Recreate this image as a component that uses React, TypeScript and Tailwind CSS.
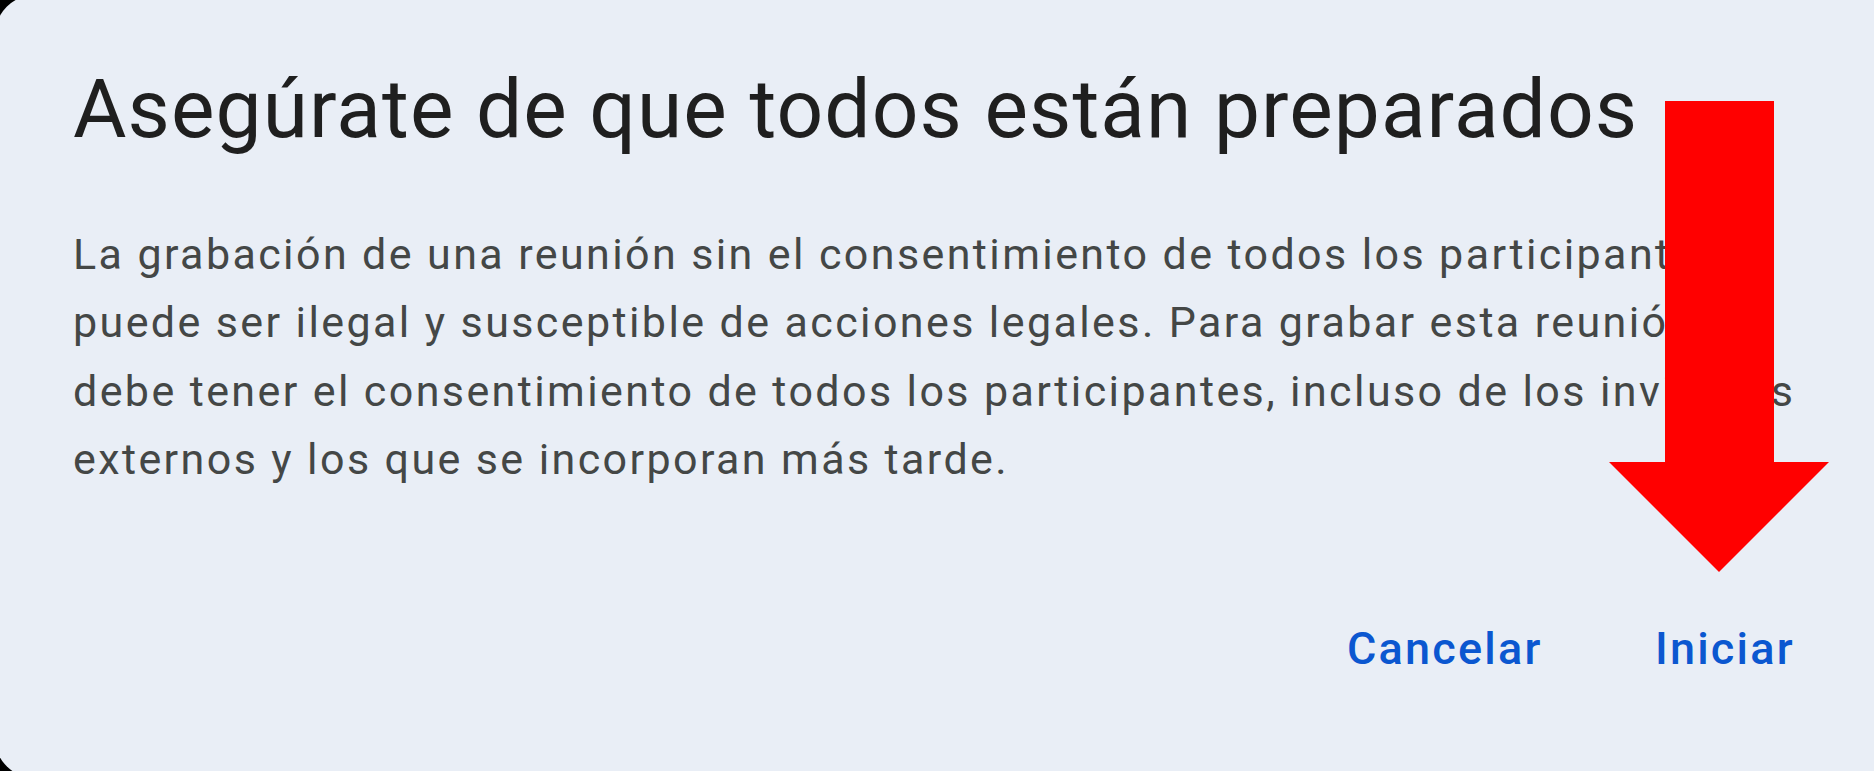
import React from "react";

export default function App() {
  return (
    <div className="relative w-[1874px] h-[771px] overflow-hidden bg-black" style={{ fontFamily: "Roboto, 'Noto Sans', sans-serif" }}>
      <div className="-mt-[5px] -ml-[5px] w-[1900px] h-[783px] rounded-[40px] bg-[#e9eef6] flex flex-col pl-[78px]">
        <h1 className="mt-[66px] text-[82px] leading-[96px] tracking-[1.1px] text-[#1f1f1f] font-normal whitespace-nowrap">
          Asegúrate de que todos están preparados
        </h1>
        <p className="mt-[63px] text-[43px] leading-[68.3px] tracking-[2.4px] text-[#444746] whitespace-nowrap">
          La grabación de una reunión sin el consentimiento de todos los participantes
          <br />
          puede ser ilegal y susceptible de acciones legales. Para grabar esta reunión,
          <br />
          debe tener el consentimiento de todos los participantes, incluso de los invitados
          <br />
          externos y los que se incorporan más tarde.
        </p>
        <div className="mt-[126px] flex pl-[1274px] text-[45px] leading-[60px] tracking-[2.2px] font-medium text-[#0b57d0]">
          <span className="w-[308px]">Cancelar</span>
          <span>Iniciar</span>
        </div>
      </div>
      <svg className="absolute left-0 top-0" width="1874" height="771" viewBox="0 0 1874 771">
        <polygon points="1665,101 1774,101 1774,462 1829,462 1719,572 1609,462 1665,462" fill="#ff0000" />
      </svg>
    </div>
  );
}
